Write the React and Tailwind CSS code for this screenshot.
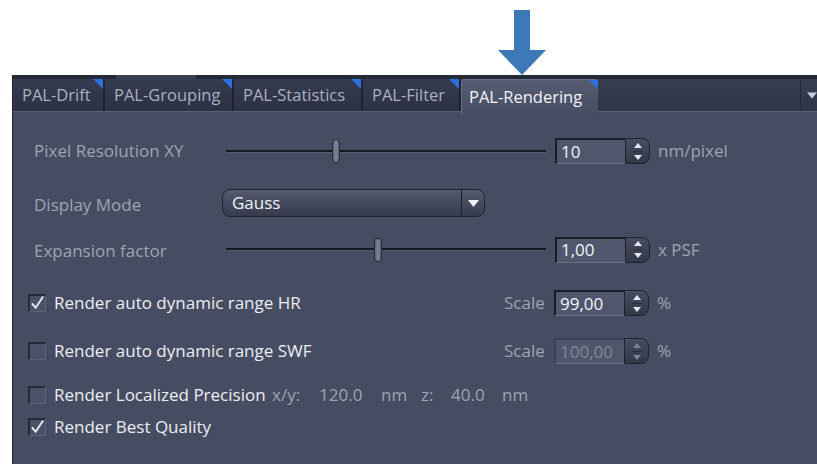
import React from 'react';

const font = { fontFamily: '"Open Sans", "Noto Sans", sans-serif' };

function Tab({ label, active, width }) {
    if (active) {
        return (
            <div
                className={`relative h-[35px] ${width} rounded-t-[3px] bg-gradient-to-b from-[#565c72] to-[#474d62] border-t border-l border-[#6a7086] flex items-center pl-[7px] text-[16.5px] text-[#f2f4f8] -mb-[2px]`}
            >
                {label}
                <span className="absolute top-0 right-0 w-[9px] h-[9px] bg-[#2f6fe0] [clip-path:polygon(0_0,100%_0,100%_100%)]" />
            </div>
        );
    }
    return (
        <div
            className={`relative h-[32px] ${width} rounded-t-[2px] bg-gradient-to-b from-[#363c50] to-[#2c3143] border-r-2 border-[#1f2331] flex items-center pl-[9px] text-[16.5px] text-[#a9b0c0]`}
        >
            {label}
            <span className="absolute top-0 right-0 w-[10px] h-[10px] bg-[#2f6fe0] [clip-path:polygon(0_0,100%_0,100%_100%)]" />
        </div>
    );
}

function Slider({ pos }) {
    return (
        <div className="relative w-[320px] h-[26px] flex items-center">
            <div className="w-full h-[2px] bg-[#161922] border-b border-[#555b70] box-content" />
            <div
                className="absolute top-[1px] w-[8px] h-[24px] rounded-full bg-gradient-to-r from-[#5c6276] via-[#80869a] to-[#5c6276] border border-[#262a36]"
                style={{ left: pos }}
            />
        </div>
    );
}

function SpinBox({ value, disabled }) {
    return (
        <div className="flex h-[26px]">
            <div
                className={`w-[70px] h-full bg-[#50566b] border-t-2 border-l-2 border-[#1a1d27] border-b border-b-[#6a7085] flex items-center pl-[4px] text-[17px] ${
                    disabled ? 'text-[#80869a] border-t-[#3c4256] border-l-[#3c4256]' : 'text-[#f2f4f8]'
                }`}
            >
                {value}
            </div>
            <div className="w-[25px] h-full rounded-r-[8px] bg-gradient-to-b from-[#474d62] to-[#333849] border border-[#1f2330] flex flex-col items-center justify-center gap-[3px]">
                <svg width="8" height="5" viewBox="0 0 8 5">
                    <path d="M4 0 L8 5 L0 5 Z" fill={disabled ? '#7e8497' : '#e4e7ee'} />
                </svg>
                <div className="w-[10px] h-px bg-[#2a2e3c]" />
                <svg width="8" height="5" viewBox="0 0 8 5">
                    <path d="M0 0 L8 0 L4 5 Z" fill={disabled ? '#7e8497' : '#e4e7ee'} />
                </svg>
            </div>
        </div>
    );
}

function CheckBox({ checked }) {
    return (
        <div className="w-[18px] h-[18px] bg-[#4b5166] border-t-2 border-l-2 border-[#262a36] border-b border-r border-b-[#5c6277] border-r-[#5c6277] flex items-center justify-center">
            {checked && (
                <svg width="16" height="16" viewBox="0 0 16 16" className="-mt-[2px]">
                    <path d="M2 8.5 L6 13 L14 1" fill="none" stroke="#e8ebf1" strokeWidth="2" />
                </svg>
            )}
        </div>
    );
}

export default function App() {
    return (
        <div className="w-[817px] h-[464px] bg-white overflow-hidden" style={font}>
            {/* pointer arrow above the tab bar */}
            <div className="h-[75px] pl-[498px] pt-[10px]">
                <svg width="48" height="65" viewBox="0 0 48 65">
                    <path d="M16 0 H32 V40 H48 L24 65 L0 40 H16 Z" fill="#3c79b6" />
                </svg>
            </div>

            <div className="ml-[12px] h-[389px] bg-[#464c61] border-l border-[#20232e] flex flex-col">
                {/* tab bar */}
                <div className="h-[4px] flex">
                    <div className="w-[103px] bg-[#262a36]" />
                    <div className="w-[80px] bg-[#3a4054]" />
                    <div className="flex-1 bg-[#262a36]" />
                </div>
                <div className="h-[33px] bg-gradient-to-b from-[#373d51] to-[#30364a] flex items-start border-b border-[#596075] relative">
                    <div className="flex items-start">
                        <Tab label="PAL-Drift" width="w-[92px]" />
                        <Tab label="PAL-Grouping" width="w-[129px]" />
                        <Tab label="PAL-Statistics" width="w-[129px]" />
                        <Tab label="PAL-Filter" width="w-[98px]" />
                        <Tab label="PAL-Rendering" width="w-[137px]" active />
                    </div>
                    <div className="flex-1" />
                    <div className="w-px h-full bg-[#262a36]" />
                    <div className="w-[16px] h-full flex items-center pl-[6px]">
                        <svg width="12" height="7" viewBox="0 0 12 7">
                            <path d="M0 0 H12 L6 7 Z" fill="#c9cdd6" />
                        </svg>
                    </div>
                </div>

                {/* settings */}
                <div className="flex flex-col text-[17px] text-[#9ea4b3]">
                    <div className="flex items-center h-[26px] mt-[26px] pl-[21px]">
                        <div className="w-[192px]">Pixel Resolution XY</div>
                        <Slider pos={106} />
                        <div className="ml-[9px]">
                            <SpinBox value="10" />
                        </div>
                        <div className="ml-[8px]">nm/pixel</div>
                    </div>

                    <div className="flex items-center h-[28px] mt-[25px] pl-[21px]">
                        <div className="w-[188px] pt-[3px]">Display Mode</div>
                        <div className="w-[263px] h-[28px] rounded-[8px] bg-gradient-to-b from-[#555b70] to-[#363b4d] border border-[#20232e] flex items-center">
                            <div className="flex-1 pl-[9px] text-[#f0f2f6]">Gauss</div>
                            <div className="w-px h-full bg-[#1c1f29]" />
                            <div className="w-[22px] flex justify-center">
                                <svg width="11" height="7" viewBox="0 0 11 7">
                                    <path d="M0 0 H11 L5.5 7 Z" fill="#eef0f4" />
                                </svg>
                            </div>
                        </div>
                    </div>

                    <div className="flex items-center h-[27px] mt-[19px] pl-[21px]">
                        <div className="w-[192px] pt-[2px]">Expansion factor</div>
                        <Slider pos={148} />
                        <div className="ml-[9px]">
                            <SpinBox value="1,00" />
                        </div>
                        <div className="ml-[8px]">x PSF</div>
                    </div>

                    <div className="flex items-center h-[26px] mt-[27px] pl-[15px]">
                        <CheckBox checked />
                        <div className="ml-[8px] w-[450px] text-[#eceef3]">Render auto dynamic range HR</div>
                        <div className="w-[50px]">Scale</div>
                        <SpinBox value="99,00" />
                        <div className="ml-[8px]">%</div>
                    </div>

                    <div className="flex items-center h-[26px] mt-[22px] pl-[15px]">
                        <CheckBox />
                        <div className="ml-[8px] w-[450px] text-[#eceef3]">Render auto dynamic range SWF</div>
                        <div className="w-[50px]">Scale</div>
                        <SpinBox value="100,00" disabled />
                        <div className="ml-[8px]">%</div>
                    </div>

                    <div className="flex items-center h-[26px] mt-[18px] pl-[15px]">
                        <CheckBox />
                        <div className="ml-[8px] w-[218px] text-[#eceef3]">Render Localized Precision</div>
                        <div className="w-[47px]">x/y:</div>
                        <div className="w-[62px]">120.0</div>
                        <div className="w-[40px]">nm</div>
                        <div className="w-[30px]">z:</div>
                        <div className="w-[51px]">40.0</div>
                        <div>nm</div>
                    </div>

                    <div className="flex items-center h-[26px] mt-[6px] pl-[15px]">
                        <CheckBox checked />
                        <div className="ml-[8px] text-[#eceef3]">Render Best Quality</div>
                    </div>
                </div>
            </div>
        </div>
    );
}
